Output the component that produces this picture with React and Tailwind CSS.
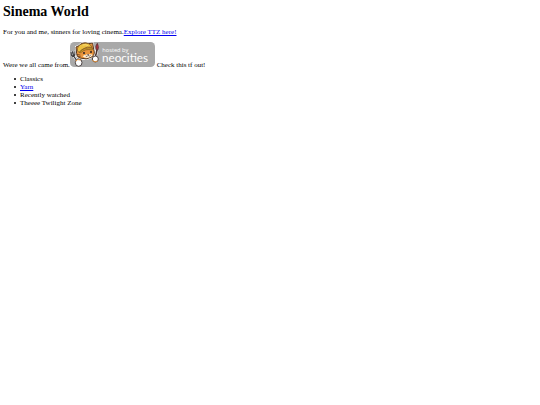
import React from "react";

const shelves = [
  { name: "Classics" },
  { name: "Yarn", href: "#yarn" },
  { name: "Recently watched" },
  { name: "Theeee Twilight Zone" },
];

const NeocitiesBadge = () => (
  <svg
    viewBox="0 0 255 75"
    className="inline w-[85px] h-[25px] align-baseline"
    role="img"
    aria-label="Hosted by Neocities"
  >
    <rect x="0" y="0" width="255" height="75" rx="13" fill="#a9a9a9" />

    {/* fork */}
    <path d="M22 58 L11 42 M4 32 L6 40 L14 40 L14 30" stroke="#fff" strokeWidth="7" fill="none" strokeLinecap="round" />
    <path
      d="M23 60 L11 42 M3 31 L4 38 Q7 45 12 42 Q16 39 15 29 M8 30 L10 39"
      fill="none"
      stroke="#3a3a3d"
      strokeWidth="4"
      strokeLinecap="round"
    />

    {/* brush */}
    <path d="M75 48 L83 12" stroke="#fff" strokeWidth="9" strokeLinecap="round" />
    <path d="M75 48 L81 24" stroke="#4a3330" strokeWidth="5" strokeLinecap="round" />
    <path d="M78 23 Q75 11 82 4 Q89 13 84 24 Z" fill="#a8313d" stroke="#4a3330" strokeWidth="2" />

    {/* cat head */}
    <path
      d="M20 35 L18 15 L27 11 Q38 -2 56 5 L68 3 L71 22 Q77 38 65 45 Q49 55 30 48 Q19 44 20 35 Z"
      fill="#e9953d"
      stroke="#fff"
      strokeWidth="6"
      strokeLinejoin="round"
    />
    <path
      d="M20 35 L18 15 L27 11 Q38 -2 56 5 L68 3 L71 22 Q77 38 65 45 Q49 55 30 48 Q19 44 20 35 Z"
      fill="#e9953d"
      stroke="#543721"
      strokeWidth="3"
      strokeLinejoin="round"
    />
    <path
      d="M38 43 Q42 39 48 38 Q54 34 60 37 Q66 36 68 39 Q64 46 52 48 Q42 48 38 43 Z"
      fill="#fff4dd"
    />
    <path
      d="M22 27 Q21 9 38 5 Q58 -1 66 16 Q52 12 41 20 Q32 24 28 31 Z"
      fill="#ecc040"
      stroke="#72501f"
      strokeWidth="2"
    />
    <path d="M28 31 Q43 13 69 19 L66 24 Q46 19 32 32 Z" fill="#d9a528" stroke="#72501f" strokeWidth="2" />
    <path d="M38 9 Q48 6 55 12" fill="none" stroke="#ffe58a" strokeWidth="2" />
    <circle cx="42" cy="33" r="3" fill="#292325" />
    <circle cx="63" cy="30" r="3" fill="#292325" />
    <path d="M51 37 L58 36 L54 40 Z" fill="#49302b" />
    <path
      d="M47 42 Q52 46 54 40 Q58 45 62 40"
      fill="none"
      stroke="#49302b"
      strokeWidth="2"
    />
    <path d="M21 37 L31 39 M23 44 L32 43" stroke="#543721" strokeWidth="2" />

    {/* paws */}
    <ellipse cx="26" cy="62" rx="10" ry="11" fill="#fff" stroke="#4d4545" strokeWidth="3" />
    <path d="M17 57 Q22 50 32 54" fill="none" stroke="#e9953d" strokeWidth="3" />
    <ellipse cx="76" cy="51" rx="9" ry="9" fill="#fff" stroke="#4d4545" strokeWidth="3" />
    <path d="M67 55 Q73 63 83 57" fill="none" stroke="#e9953d" strokeWidth="3" />

    <text x="97" y="29" fill="#fff" fontSize="17" fontFamily="Open Sans, sans-serif">
      hosted by
    </text>
    <text x="96" y="61" fill="#fff" fontSize="35" fontFamily="Lato, sans-serif">
      neocities
    </text>
  </svg>
);

const App = () => {
  return (
    <main className="px-[3px] pt-1 font-['Liberation_Serif',serif] text-[7px] leading-[8px] text-black">
      <h1 className="text-[14px] leading-[16px] font-bold">Sinema World</h1>
      <p className="mt-2">
        For you and me, sinners for loving cinema.
        <a href="#ttz" className="text-[#0000ee] underline">
          Explore TTZ here!
        </a>
      </p>
      <p className="mt-1.5">
        Were we all came from.
        <a href="#neocities">
          <NeocitiesBadge />
        </a>{" "}
        Check this tf out!
      </p>
      <ul className="mt-1.5 pl-[11px]">
        {shelves.map((shelf) => (
          <li
            key={shelf.name}
            className="flex items-center gap-1 before:size-0.5 before:rounded-full before:bg-black before:content-['']"
          >
            {shelf.href ? (
              <a href={shelf.href} className="text-[#0000ee] underline">
                {shelf.name}
              </a>
            ) : (
              shelf.name
            )}
          </li>
        ))}
      </ul>
    </main>
  );
};

export default App;
